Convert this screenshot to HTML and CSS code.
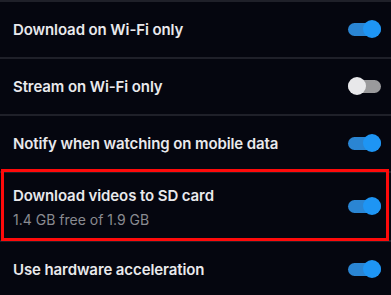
FILE: index.html
```html
<!DOCTYPE html>
<html lang="en">
<head>
<meta charset="utf-8">
<link rel="stylesheet" href="styles.css">
</head>
<body>
<div class="list">
  <div class="row">
    <div class="text"><div class="title">Download on Wi-Fi only</div></div>
    <div class="toggle on"><span class="thumb"></span></div>
  </div>
  <div class="row">
    <div class="text"><div class="title">Stream on Wi-Fi only</div></div>
    <div class="toggle off"><span class="thumb"></span></div>
  </div>
  <div class="row">
    <div class="text"><div class="title">Notify when watching on mobile data</div></div>
    <div class="toggle on"><span class="thumb"></span></div>
  </div>
  <div class="row tall highlighted">
    <div class="text">
      <div class="title">Download videos to SD card</div>
      <div class="sub">1.4 GB free of 1.9 GB</div>
    </div>
    <div class="toggle on"><span class="thumb"></span></div>
    <div class="highlight"></div>
  </div>
  <div class="row">
    <div class="text"><div class="title">Use hardware acceleration</div></div>
    <div class="toggle on"><span class="thumb"></span></div>
  </div>
</div>
</body>
</html>
```
FILE: styles.css
```css
html, body {
  margin: 0;
  padding: 0;
  background: #05060f;
}
body {
  width: 391px;
  height: 295px;
  overflow: hidden;
  font-family: Inter, "Noto Sans", "Liberation Sans", sans-serif;
  color: #e9e9ec;
}
.list {
  display: flex;
  flex-direction: column;
}
.row {
  display: flex;
  align-items: center;
  justify-content: space-between;
  height: 55px;
  border-top: 2px solid #1f2029;
  padding: 0 10px 0 13px;
}
.row.tall {
  height: 67px;
}
.highlighted {
  position: relative;
}
.text {
  display: flex;
  flex-direction: column;
  gap: 6px;
}
.title {
  font-size: 15px;
  font-weight: 600;
  letter-spacing: -0.1px;
}
.sub {
  font-size: 14px;
  font-weight: 400;
  color: #8a8b91;
}
.toggle {
  position: relative;
  width: 33px;
  height: 13px;
  border-radius: 7px;
  flex: none;
}
.toggle .thumb {
  position: absolute;
  top: -3px;
  width: 18px;
  height: 18px;
  border-radius: 50%;
}
.toggle.on {
  background: #2a85d3;
}
.toggle.on .thumb {
  right: 0;
  background: #1e95f4;
}
.toggle.off {
  background: #9a9a9c;
}
.toggle.off .thumb {
  left: 0;
  background: #e8e8ea;
}
.highlight {
  position: absolute;
  left: 1px;
  right: 2px;
  top: -4px;
  bottom: -1px;
  border: 3px solid #ff0a0a;
  pointer-events: none;
}
```
